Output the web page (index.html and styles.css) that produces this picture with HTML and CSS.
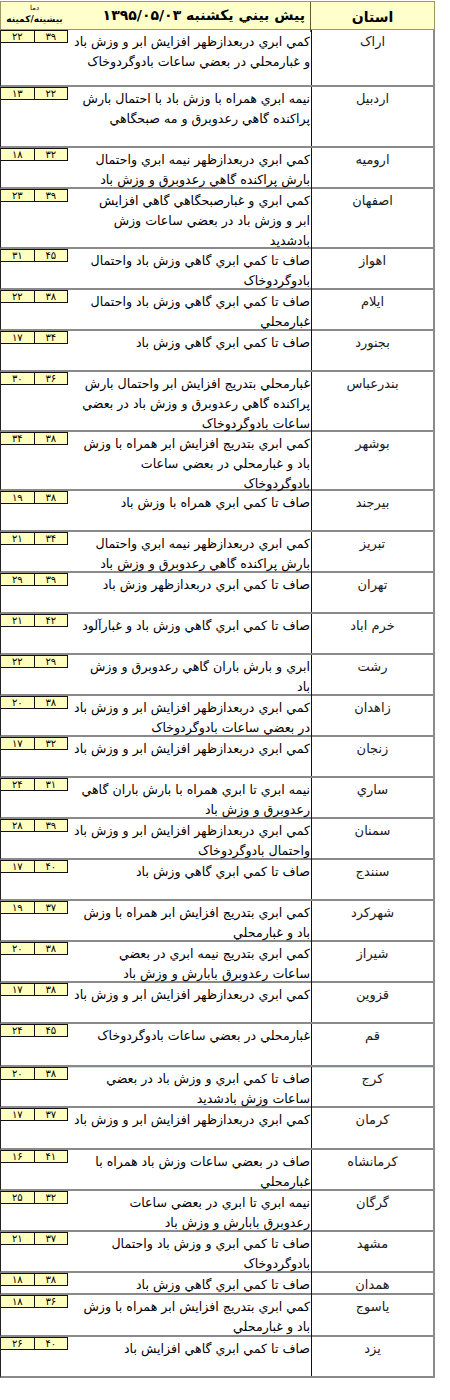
FILE: index.html
```html
<!DOCTYPE html>
<html lang="fa">
<head>
<meta charset="utf-8">
<title>پيش بيني</title>
<link rel="stylesheet" href="styles.css">
</head>
<body>
<div class="table">
  <div class="head">
    <div class="head-temp"><span class="head-temp-label">دما</span><span class="head-temp-sub">بيشينه/كمينه</span></div>
    <div class="head-title">پيش بيني يكشنبه ۱۳۹۵/۰۵/۰۳</div>
    <div class="head-prov">استان</div>
  </div>

  <div class="row h57"><div class="temps"><span class="t">۲۲</span><span class="t">۳۹</span></div><div class="desc">كمي ابري دربعدازظهر افزايش ابر و وزش باد<br>و غبارمحلي در بعضي ساعات بادوگردوخاک</div><div class="prov">اراک</div></div>
  <div class="row h61"><div class="temps"><span class="t">۱۳</span><span class="t">۲۲</span></div><div class="desc">نيمه ابري همراه با وزش باد با احتمال بارش<br>پراکنده گاهي رعدوبرق و مه صبحگاهي</div><div class="prov">اردبيل</div></div>
  <div class="row"><div class="temps"><span class="t">۱۸</span><span class="t">۳۲</span></div><div class="desc">كمي ابري دربعدازظهر نيمه ابري واحتمال<br>بارش پراکنده گاهي رعدوبرق و وزش باد</div><div class="prov">اروميه</div></div>
  <div class="row h60"><div class="temps"><span class="t">۲۳</span><span class="t">۳۹</span></div><div class="desc">كمي ابري و غبارصبحگاهي گاهي افزايش<br>ابر و وزش باد در بعضي ساعات وزش<br>بادشديد</div><div class="prov">اصفهان</div></div>
  <div class="row"><div class="temps"><span class="t">۳۱</span><span class="t">۴۵</span></div><div class="desc">صاف تا كمي ابري گاهي وزش باد واحتمال<br>بادوگردوخاک</div><div class="prov">اهواز</div></div>
  <div class="row"><div class="temps"><span class="t">۲۲</span><span class="t">۳۸</span></div><div class="desc">صاف تا كمي ابري گاهي وزش باد واحتمال<br>غبارمحلي</div><div class="prov">ايلام</div></div>
  <div class="row"><div class="temps"><span class="t">۱۷</span><span class="t">۳۴</span></div><div class="desc">صاف تا كمي ابري گاهي وزش باد</div><div class="prov">بجنورد</div></div>
  <div class="row h60"><div class="temps"><span class="t">۳۰</span><span class="t">۳۶</span></div><div class="desc">غبارمحلي بتدريج افزايش ابر واحتمال بارش<br>پراکنده گاهي رعدوبرق و وزش باد در بعضي<br>ساعات بادوگردوخاک</div><div class="prov">بندرعباس</div></div>
  <div class="row h59"><div class="temps"><span class="t">۳۴</span><span class="t">۳۸</span></div><div class="desc">كمي ابري بتدريج افزايش ابر همراه با وزش<br>باد و غبارمحلي در بعضي ساعات<br>بادوگردوخاک</div><div class="prov">بوشهر</div></div>
  <div class="row"><div class="temps"><span class="t">۱۹</span><span class="t">۳۸</span></div><div class="desc">صاف تا كمي ابري همراه با وزش باد</div><div class="prov">بيرجند</div></div>
  <div class="row"><div class="temps"><span class="t">۲۱</span><span class="t">۳۴</span></div><div class="desc">كمي ابري دربعدازظهر نيمه ابري واحتمال<br>بارش پراکنده گاهي رعدوبرق و وزش باد</div><div class="prov">تبريز</div></div>
  <div class="row"><div class="temps"><span class="t">۲۹</span><span class="t">۳۹</span></div><div class="desc">صاف تا كمي ابري دربعدازظهر وزش باد</div><div class="prov">تهران</div></div>
  <div class="row"><div class="temps"><span class="t">۲۱</span><span class="t">۴۲</span></div><div class="desc">صاف تا كمي ابري گاهي وزش باد و غبارآلود</div><div class="prov">خرم اباد</div></div>
  <div class="row"><div class="temps"><span class="t">۲۲</span><span class="t">۲۹</span></div><div class="desc">ابري و بارش باران گاهي رعدوبرق و وزش<br>باد</div><div class="prov">رشت</div></div>
  <div class="row"><div class="temps"><span class="t">۲۰</span><span class="t">۳۸</span></div><div class="desc">كمي ابري دربعدازظهر افزايش ابر و وزش باد<br>در بعضي ساعات بادوگردوخاک</div><div class="prov">زاهدان</div></div>
  <div class="row"><div class="temps"><span class="t">۱۷</span><span class="t">۳۲</span></div><div class="desc">كمي ابري دربعدازظهر افزايش ابر و وزش باد</div><div class="prov">زنجان</div></div>
  <div class="row"><div class="temps"><span class="t">۲۴</span><span class="t">۳۱</span></div><div class="desc">نيمه ابري تا ابري همراه با بارش باران گاهي<br>رعدوبرق و وزش باد</div><div class="prov">ساري</div></div>
  <div class="row"><div class="temps"><span class="t">۲۸</span><span class="t">۳۹</span></div><div class="desc">كمي ابري دربعدازظهر افزايش ابر و وزش باد<br>واحتمال بادوگردوخاک</div><div class="prov">سمنان</div></div>
  <div class="row"><div class="temps"><span class="t">۱۷</span><span class="t">۴۰</span></div><div class="desc">صاف تا كمي ابري گاهي وزش باد</div><div class="prov">سنندج</div></div>
  <div class="row"><div class="temps"><span class="t">۱۹</span><span class="t">۳۷</span></div><div class="desc">كمي ابري بتدريج افزايش ابر همراه با وزش<br>باد و غبارمحلي</div><div class="prov">شهرکرد</div></div>
  <div class="row"><div class="temps"><span class="t">۲۰</span><span class="t">۳۸</span></div><div class="desc">كمي ابري بتدريج نيمه ابري در بعضي<br>ساعات رعدوبرق بابارش و وزش باد</div><div class="prov">شيراز</div></div>
  <div class="row"><div class="temps"><span class="t">۱۷</span><span class="t">۳۸</span></div><div class="desc">كمي ابري دربعدازظهر افزايش ابر و وزش باد</div><div class="prov">قزوين</div></div>
  <div class="row h43"><div class="temps"><span class="t">۲۴</span><span class="t">۴۵</span></div><div class="desc">غبارمحلي در بعضي ساعات بادوگردوخاک</div><div class="prov">قم</div></div>
  <div class="row row-split"><div class="temps"><span class="t">۲۰</span><span class="t">۳۸</span></div><div class="desc">صاف تا كمي ابري و وزش باد در بعضي<br>ساعات وزش بادشديد</div><div class="prov">کرج</div></div>
  <div class="row h42"><div class="temps"><span class="t">۱۷</span><span class="t">۳۷</span></div><div class="desc">كمي ابري دربعدازظهر افزايش ابر و وزش باد</div><div class="prov">کرمان</div></div>
  <div class="row"><div class="temps"><span class="t">۱۶</span><span class="t">۴۱</span></div><div class="desc">صاف در بعضي ساعات وزش باد همراه با<br>غبارمحلي</div><div class="prov">کرمانشاه</div></div>
  <div class="row"><div class="temps"><span class="t">۲۵</span><span class="t">۳۲</span></div><div class="desc">نيمه ابري تا ابري در بعضي ساعات<br>رعدوبرق بابارش و وزش باد</div><div class="prov">گرگان</div></div>
  <div class="row"><div class="temps"><span class="t">۲۱</span><span class="t">۳۷</span></div><div class="desc">صاف تا كمي ابري و وزش باد واحتمال<br>بادوگردوخاک</div><div class="prov">مشهد</div></div>
  <div class="row h22"><div class="temps"><span class="t">۱۸</span><span class="t">۳۸</span></div><div class="desc">صاف تا كمي ابري گاهي وزش باد</div><div class="prov">همدان</div></div>
  <div class="row h42"><div class="temps"><span class="t">۱۸</span><span class="t">۳۶</span></div><div class="desc">كمي ابري بتدريج افزايش ابر همراه با وزش<br>باد و غبارمحلي</div><div class="prov">ياسوج</div></div>
  <div class="row"><div class="temps"><span class="t">۲۶</span><span class="t">۴۰</span></div><div class="desc">صاف تا كمي ابري گاهي افزايش باد</div><div class="prov">يزد</div></div>
</div>
</body>
</html>
```

FILE: styles.css
```css
html, body {
  margin: 0;
  padding: 0;
  background: #ffffff;
}

body {
  font-family: "DejaVu Sans", sans-serif;
  color: #000;
}

.table {
  width: 435px;
  padding-top: 1px;
}

.head {
  display: grid;
  grid-template-columns: 67px 243px 123px;
  height: 29px;
  box-sizing: border-box;
  background: #ffffcc;
  border: 1px solid #9c9660;
}

.head-temp {
  display: flex;
  flex-direction: column;
  align-items: center;
  direction: rtl;
  padding-top: 2px;
}

.head-temp-label {
  font-size: 7px;
  line-height: 9px;
}

.head-temp-sub {
  font-size: 9px;
  font-weight: bold;
  line-height: 12px;
}

.head-title {
  direction: rtl;
  text-align: right;
  font-size: 14px;
  font-weight: bold;
  line-height: 26px;
  padding-right: 5px;
  border-right: 1px solid #5e5a38;
  white-space: nowrap;
}

.head-prov {
  direction: rtl;
  text-align: center;
  font-size: 14px;
  font-weight: bold;
  line-height: 30px;
}

.row {
  display: grid;
  grid-template-columns: 67px 244px 121px;
  height: 41px;
  box-sizing: border-box;
  border-left: 1px solid #222;
  border-right: 2px solid #8a8a8a;
  border-bottom: 2px solid #8a8a8a;
}

.row.h22 { height: 22px; }
.row.h42 { height: 42px; }
.row.h43 { height: 43px; }
.row.h57 { height: 57px; }
.row.h59 { height: 59px; }
.row.h60 { height: 60px; }
.row.h61 { height: 61px; }

.row-split {
  box-shadow: inset 0 1px 0 #e9df8a;
}

.temps {
  display: flex;
  align-self: start;
  height: 13px;
  box-sizing: border-box;
  border: 1px solid #111;
  border-left: none;
  background: #ffffbf;
  direction: ltr;
  position: relative;
  z-index: 1;
}

.t {
  flex: 1;
  text-align: center;
  font-size: 10px;
  line-height: 11px;
}

.t + .t {
  border-left: 1px solid #111;
}

.desc {
  direction: rtl;
  text-align: right;
  white-space: nowrap;
  font-size: 12.6px;
  line-height: 20px;
  padding-top: 2px;
  padding-right: 1px;
  border-right: 1px solid #111;
}

.prov {
  direction: rtl;
  text-align: center;
  font-size: 13px;
  line-height: 20px;
  padding-top: 2px;
  color: #1a1a1a;
}
```
